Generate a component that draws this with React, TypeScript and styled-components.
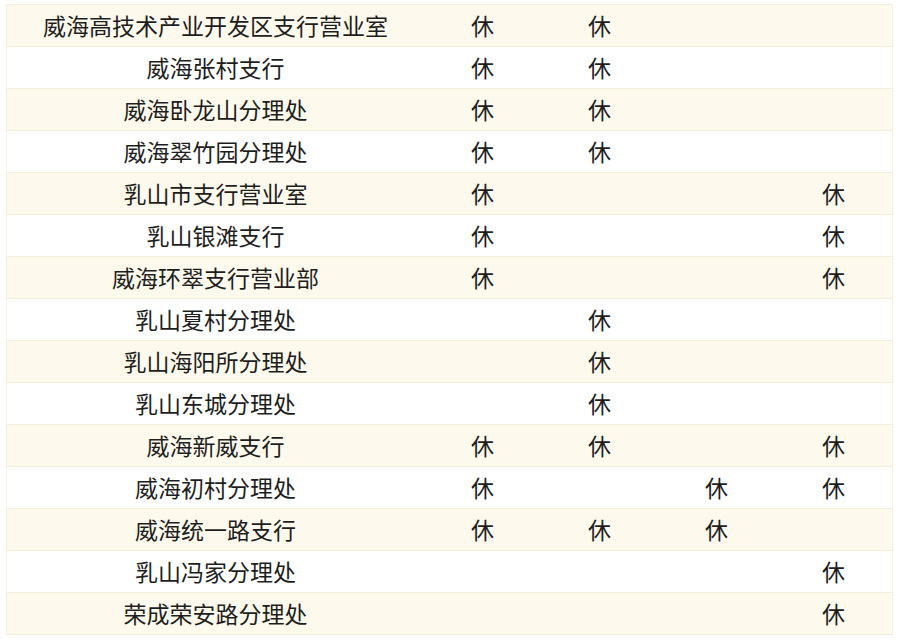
import styled, { createGlobalStyle } from "styled-components";

const GlobalStyle = createGlobalStyle`
  body {
    margin: 0;
    background: #ffffff;
    font-family: "Noto Sans CJK SC", "Noto Sans", sans-serif;
  }
`;

const Page = styled.div`
  padding: 4px 9px 0 6px;
`;

const Table = styled.table`
  width: 885px;
  border-collapse: collapse;
  table-layout: fixed;
  border: 1px solid #f4efe0;
`;

const Row = styled.tr<{ $shaded: boolean }>`
  height: 42px;
  background: ${(p) => (p.$shaded ? "#fdf9ec" : "#ffffff")};
  border-bottom: 1px solid #f3eedc;
`;

const NameCell = styled.td`
  width: 417px;
  padding: 0 0 2px;
  text-align: center;
  font-size: 23px;
  color: #1e1e1e;
  white-space: nowrap;
`;

const MarkCell = styled.td`
  width: 117px;
  padding: 0 0 2px;
  text-align: center;
  font-size: 23px;
  color: #1e1e1e;
`;

const rows: [string, boolean[]][] = [
  ["威海高技术产业开发区支行营业室", [true, true, false, false]],
  ["威海张村支行", [true, true, false, false]],
  ["威海卧龙山分理处", [true, true, false, false]],
  ["威海翠竹园分理处", [true, true, false, false]],
  ["乳山市支行营业室", [true, false, false, true]],
  ["乳山银滩支行", [true, false, false, true]],
  ["威海环翠支行营业部", [true, false, false, true]],
  ["乳山夏村分理处", [false, true, false, false]],
  ["乳山海阳所分理处", [false, true, false, false]],
  ["乳山东城分理处", [false, true, false, false]],
  ["威海新威支行", [true, true, false, true]],
  ["威海初村分理处", [true, false, true, true]],
  ["威海统一路支行", [true, true, true, false]],
  ["乳山冯家分理处", [false, false, false, true]],
  ["荣成荣安路分理处", [false, false, false, true]],
];

const App = () => {
  return (
    <Page>
      <GlobalStyle />
      <Table>
        <tbody>
          {rows.map(([name, marks], index) => (
            <Row key={name} $shaded={index % 2 === 0}>
              <NameCell>{name}</NameCell>
              {marks.map((m, i) => (
                <MarkCell key={i}>{m ? "休" : ""}</MarkCell>
              ))}
            </Row>
          ))}
        </tbody>
      </Table>
    </Page>
  );
};

export default App;
